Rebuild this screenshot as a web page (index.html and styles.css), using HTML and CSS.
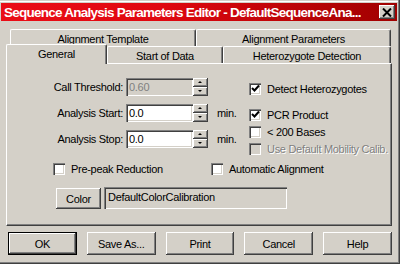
FILE: index.html
```html
<!DOCTYPE html>
<html lang="en">
<head>
  <meta charset="UTF-8" />
  <title>Sequence Analysis Parameters Editor</title>
  <link rel="stylesheet" href="styles.css">
</head>
<body>
  <div class="window">
    <div class="titlebar">
      <span class="title">Sequence Analysis Parameters Editor - DefaultSequenceAna...</span>
      <span class="close">
        <svg width="10" height="9" viewBox="0 0 10 9"><path d="M1 0.5 L9 8.5 M9 0.5 L1 8.5" stroke="#000" stroke-width="2" fill="none"/></svg>
      </span>
    </div>

    <div class="content">
      <div class="tabs">
        <div class="tabrow back">
          <div class="tab t-align-tpl">Alignment Template</div>
          <div class="tab t-align-par">Alignment Parameters</div>
        </div>
        <div class="tabrow front">
          <div class="tab t-general selected">General</div>
          <div class="tab t-start">Start of Data</div>
          <div class="tab t-het">Heterozygote Detection</div>
        </div>
      </div>

      <div class="panel">
        <div class="top">
          <div class="fields">
            <div class="field">
              <label class="lbl">Call Threshold:</label>
              <span class="edit disabled">0.60</span>
              <span class="spin"><span class="up"></span><span class="down"></span></span>
            </div>
            <div class="field">
              <label class="lbl">Analysis Start:</label>
              <span class="edit">0.0</span>
              <span class="spin"><span class="up"></span><span class="down"></span></span>
              <span class="unit">min.</span>
            </div>
            <div class="field">
              <label class="lbl">Analysis Stop:</label>
              <span class="edit">0.0</span>
              <span class="spin"><span class="up"></span><span class="down"></span></span>
              <span class="unit">min.</span>
            </div>
          </div>

          <div class="checks">
            <div class="check first"><span class="box"><svg width="9" height="9" viewBox="0 0 9 9"><path d="M1 4 L3.5 6.5 L8 1.5" stroke="#000" stroke-width="2" fill="none"/></svg></span>Detect Heterozygotes</div>
            <div class="check"><span class="box"><svg width="9" height="9" viewBox="0 0 9 9"><path d="M1 4 L3.5 6.5 L8 1.5" stroke="#000" stroke-width="2" fill="none"/></svg></span>PCR Product</div>
            <div class="check"><span class="box"></span>&lt; 200 Bases</div>
            <div class="check disabled"><span class="box"></span>Use Default Mobility Calib.</div>
          </div>
        </div>

        <div class="options">
          <div class="check prepeak"><span class="box"></span>Pre-peak Reduction</div>
          <div class="check"><span class="box"></span>Automatic Alignment</div>
        </div>

        <div class="color-row">
          <button class="btn color-btn">Color</button>
          <span class="edit color-name">DefaultColorCalibration</span>
        </div>
      </div>

      <div class="buttons">
        <button class="btn default">OK</button>
        <button class="btn">Save As...</button>
        <button class="btn">Print</button>
        <button class="btn">Cancel</button>
        <button class="btn">Help</button>
      </div>
    </div>
  </div>
</body>
</html>
```

FILE: styles.css
```css
* {
  box-sizing: border-box;
}
body {
  margin: 0;
  font-family: "Liberation Sans", Arial, sans-serif;
  font-size: 11px;
  letter-spacing: -0.3px;
  color: #000;
  background: #d4d0c8;
}
.window {
  width: 400px;
  height: 264px;
  padding: 3px 3px 2px 1px;
  background: #d4d0c8;
  box-shadow: inset -1px -1px #404040, inset -2px -2px #808080, inset 0 1px #d4d0c8, inset 0 2px #fff;
}
.titlebar {
  height: 18px;
  display: flex;
  align-items: center;
  justify-content: space-between;
  padding: 0 2px 0 3px;
  background: linear-gradient(to right, #ea0d17, #e00810 40%, #a00000);
}
.title {
  color: #fff;
  font-weight: bold;
  font-size: 13.5px;
  letter-spacing: -0.75px;
  white-space: nowrap;
  overflow: hidden;
}
.close {
  flex-shrink: 0;
  width: 16px;
  height: 14px;
  display: flex;
  align-items: center;
  justify-content: center;
  background: #d4d0c8;
  box-shadow: inset -1px -1px #404040, inset 1px 1px #fff, inset -2px -2px #808080;
}
.content {
  padding: 8px 5px 0 5px;
}

/* tabs */
.tabrow {
  display: flex;
  height: 17px;
  align-items: flex-end;
}
.tabrow.back {
  margin-left: 4px;
}
.tab {
  height: 17px;
  display: flex;
  align-items: center;
  justify-content: center;
  background: #d4d0c8;
  border-top: 1px solid #fff;
  border-left: 1px solid #fff;
  border-right: 1px solid #404040;
  border-top-left-radius: 2px;
  border-top-right-radius: 2px;
  box-shadow: inset -1px 0 #808080;
  padding-top: 1px;
}
.t-align-tpl { width: 186px; }
.t-align-par { width: 195px; }
.t-general { width: 101px; }
.t-start { width: 116px; }
.t-het { width: 168px; }
.tab.selected {
  height: 20px;
  margin-bottom: -1px;
  position: relative;
  z-index: 1;
  padding-bottom: 2px;
}

/* panel */
.panel {
  height: 163px;
  border-top: 1px solid #fff;
  border-left: 1px solid #fff;
  border-right: 1px solid #404040;
  border-bottom: 1px solid #404040;
  box-shadow: inset -1px -1px #808080;
  padding-top: 14px;
}
.top {
  display: flex;
}
.fields {
  width: 242px;
  display: flex;
  flex-direction: column;
  gap: 8px;
}
.field {
  display: flex;
  align-items: center;
  height: 18px;
}
.lbl {
  width: 119px;
  padding-right: 3px;
  text-align: right;
}
.edit {
  height: 18px;
  background: #fff;
  padding: 3px 0 0 3px;
  box-shadow: inset 1px 1px #808080, inset 2px 2px #404040, inset -1px -1px #fff, inset -2px -2px #d4d0c8;
  white-space: nowrap;
}
.field .edit {
  width: 67px;
}
.edit.disabled {
  background: #d4d0c8;
  color: #808080;
}
.spin {
  width: 15px;
  height: 18px;
  display: flex;
  flex-direction: column;
}
.spin span {
  flex: 1;
  position: relative;
  background: #d4d0c8;
  box-shadow: inset -1px -1px #404040, inset 1px 1px #fff, inset -2px -2px #808080;
}
.spin span::after {
  content: "";
  position: absolute;
  left: 5px;
  top: 3px;
  border-left: 2px solid transparent;
  border-right: 2px solid transparent;
}
.spin .up::after {
  border-bottom: 2px solid #000;
}
.spin .down::after {
  border-top: 2px solid #000;
}
.unit {
  margin-left: 9px;
}

.checks {
  margin-top: 4px;
  display: flex;
  flex-direction: column;
  gap: 4px;
}
.check {
  display: flex;
  align-items: center;
  height: 13px;
  white-space: nowrap;
}
.check.first {
  margin-bottom: 9px;
}
.box {
  width: 12px;
  height: 12px;
  margin-right: 6px;
  background: #fff;
  display: flex;
  align-items: center;
  justify-content: center;
  box-shadow: inset 1px 1px #808080, inset 2px 2px #404040, inset -1px -1px #fff, inset -2px -2px #d4d0c8;
}
.check.disabled {
  color: #808080;
  text-shadow: 1px 1px #fff;
}
.check.disabled .box {
  background: #d4d0c8;
}

.options {
  display: flex;
  margin: 7px 0 0 46px;
}
.prepeak {
  width: 158px;
}
.color-row {
  display: flex;
  align-items: flex-start;
  margin: 12px 0 0 49px;
  gap: 3px;
}
.color-name {
  width: 183px;
  height: 22px;
  padding: 4px 0 0 4px;
  background: #d4d0c8;
}

/* buttons */
.btn {
  font-family: "Liberation Sans", Arial, sans-serif;
  font-size: 11px;
  letter-spacing: -0.3px;
  color: #000;
  background: #d4d0c8;
  border: none;
  padding: 0;
  box-shadow: inset -1px -1px #404040, inset 1px 1px #fff, inset -2px -2px #808080;
}
.color-btn {
  width: 45px;
  height: 21px;
  margin-top: 1px;
}
.buttons {
  display: flex;
  gap: 10px;
  margin: 6px 0 0 2px;
}
.buttons .btn {
  width: 69px;
  height: 23px;
}
.btn.default {
  border: 1px solid #000;
  box-shadow: inset -1px -1px #404040, inset 1px 1px #fff, inset -2px -2px #808080;
}
```
